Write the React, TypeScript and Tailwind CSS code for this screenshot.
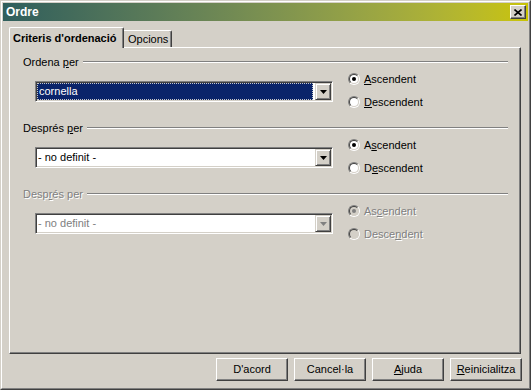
const Radio = ({ checked, disabled }: { checked?: boolean; disabled?: boolean }) => (
  <div className="w-[12px] h-[12px] rounded-full border border-t-[#808080] border-l-[#808080] border-r-white border-b-white">
    <div
      className={
        "w-full h-full rounded-full border border-t-[#404040] border-l-[#404040] border-r-[#d4d0c8] border-b-[#d4d0c8] flex items-center justify-center " +
        (disabled ? "bg-[#d4d0c8]" : "bg-white")
      }
    >
      {checked && <div className={"w-[4px] h-[4px] rounded-full " + (disabled ? "bg-[#808080]" : "bg-black")} />}
    </div>
  </div>
)

const Arrow = ({ disabled }: { disabled?: boolean }) => (
  <svg width="7" height="4" viewBox="0 0 7 4">
    <path d="M0 0h7L3.5 4z" fill={disabled ? "#808080" : "#000"} />
  </svg>
)

const Select = ({ value, selected, disabled }: { value: string; selected?: boolean; disabled?: boolean }) => (
  <div className="w-[298px] h-[21px] bg-white border border-t-[#808080] border-l-[#808080] border-r-white border-b-white shadow-[inset_1px_1px_0_#404040,inset_-1px_-1px_0_#d4d0c8] p-px flex">
    <div className="flex-1 pr-[2px]">
      {selected ? (
        <div className="h-full bg-[#0a246a] text-white border border-dotted border-[#c8c8c8] flex items-center pl-[1px]">
          {value}
        </div>
      ) : (
        <div className={"h-full flex items-center pl-[1px] " + (disabled ? "text-[#808080]" : "")}>{value}</div>
      )}
    </div>
    <div className="w-[16px] h-full bg-[#d4d0c8] border border-t-[#d4d0c8] border-l-[#d4d0c8] border-r-[#404040] border-b-[#404040] shadow-[inset_1px_1px_0_#fff,inset_-1px_-1px_0_#808080] flex items-center justify-center">
      <Arrow disabled={disabled} />
    </div>
  </div>
)

const dis = "text-[#808080] [text-shadow:1px_1px_0_#fff]"

const Section = ({
  label,
  value,
  selected,
  disabled,
  asc,
  desc,
}: {
  label: React.ReactNode
  value: string
  selected?: boolean
  disabled?: boolean
  asc: React.ReactNode
  desc: React.ReactNode
}) => (
  <div className="h-[66px]">
    <div className="h-[14px] flex items-center">
      <span className={"ml-[13px] " + (disabled ? dis : "")}>{label}</span>
      <div className="flex-1 ml-[4px] mr-[12px] border-t border-t-[#808080] border-b border-b-white" />
    </div>
    <div className="flex mt-[3px]">
      <div className="ml-[25px] pt-[9px]">
        <Select value={value} selected={selected} disabled={disabled} />
      </div>
      <div className="ml-[15px] flex flex-col gap-[9px]">
        <div className="h-[14px] flex items-center gap-[4px]">
          <Radio checked disabled={disabled} />
          <span className={disabled ? dis : ""}>{asc}</span>
        </div>
        <div className="h-[14px] flex items-center gap-[4px]">
          <Radio disabled={disabled} />
          <span className={disabled ? dis : ""}>{desc}</span>
        </div>
      </div>
    </div>
  </div>
)

const Button = ({ children }: { children: React.ReactNode }) => (
  <div className="w-[72px] h-[23px] border border-t-white border-l-white border-r-[#404040] border-b-[#404040] shadow-[inset_-1px_-1px_0_#808080] flex items-center justify-center">
    {children}
  </div>
)

export default function App() {
  return (
    <div className="w-[531px] h-[390px] bg-[#d4d0c8] border border-t-[#d4d0c8] border-l-[#d4d0c8] border-r-[#404040] border-b-[#404040] font-['Liberation_Sans',Arial,sans-serif] text-[11px] text-black leading-none">
      <div className="h-full border border-t-white border-l-white border-r-[#808080] border-b-[#808080] p-px flex flex-col">
        {/* title bar */}
        <div className="h-[18px] bg-gradient-to-r from-[#2f5e5c] to-[#c9c400] flex items-center justify-between pl-[3px] pr-[2px]">
          <span className="text-white font-bold text-[12px]">Ordre</span>
          <div className="w-[16px] h-[14px] bg-[#d4d0c8] border border-t-white border-l-white border-r-[#404040] border-b-[#404040] shadow-[inset_-1px_-1px_0_#808080] flex items-center justify-center">
            <svg width="8" height="7" viewBox="0 0 8 7">
              <path d="M0.5 0.5L7.5 6.5M7.5 0.5L0.5 6.5" stroke="#000" strokeWidth="1.6" />
            </svg>
          </div>
        </div>

        {/* tabs */}
        <div className="mt-[6px] ml-[6px] h-[20px] flex items-end">
          <div className="relative z-10 -mb-px h-[21px] w-[115px] bg-[#d4d0c8] border-t border-l border-r border-t-white border-l-white border-r-[#404040] shadow-[inset_-1px_0_0_#808080] rounded-t-[2px] flex items-center pl-[3px] font-bold">
            Criteris d'ordenació
          </div>
          <div className="h-[17px] w-[48px] border-t border-r border-t-white border-r-[#404040] shadow-[inset_-1px_0_0_#808080] rounded-tr-[2px] flex items-center pl-[4px]">
            Opcions
          </div>
        </div>

        {/* panel */}
        <div className="ml-[6px] w-[512px] h-[307px] border border-t-white border-l-white border-r-[#404040] border-b-[#404040] shadow-[inset_-1px_-1px_0_#808080] pt-[7px]">
          <Section
            label={<>Ordena <span className="underline">p</span>er</>}
            value="cornella"
            selected
            asc={<><span className="underline">A</span>scendent</>}
            desc={<><span className="underline">D</span>escendent</>}
          />
          <Section
            label={<>Després <span className="underline">p</span>er</>}
            value="- no definit -"
            asc={<>A<span className="underline">s</span>cendent</>}
            desc={<>D<span className="underline">e</span>scendent</>}
          />
          <Section
            label={<>Desp<span className="underline">r</span>és per</>}
            value="- no definit -"
            disabled
            asc={<>As<span className="underline">c</span>endent</>}
            desc={<>Desce<span className="underline">n</span>dent</>}
          />
        </div>

        {/* buttons */}
        <div className="mt-[4px] pr-[6px] flex justify-end gap-[6px]">
          <Button>D'acord</Button>
          <Button>Cancel·la</Button>
          <Button>
            <span className="underline">A</span>juda
          </Button>
          <Button>
            <span className="underline">R</span>einicialitza
          </Button>
        </div>
      </div>
    </div>
  )
}
